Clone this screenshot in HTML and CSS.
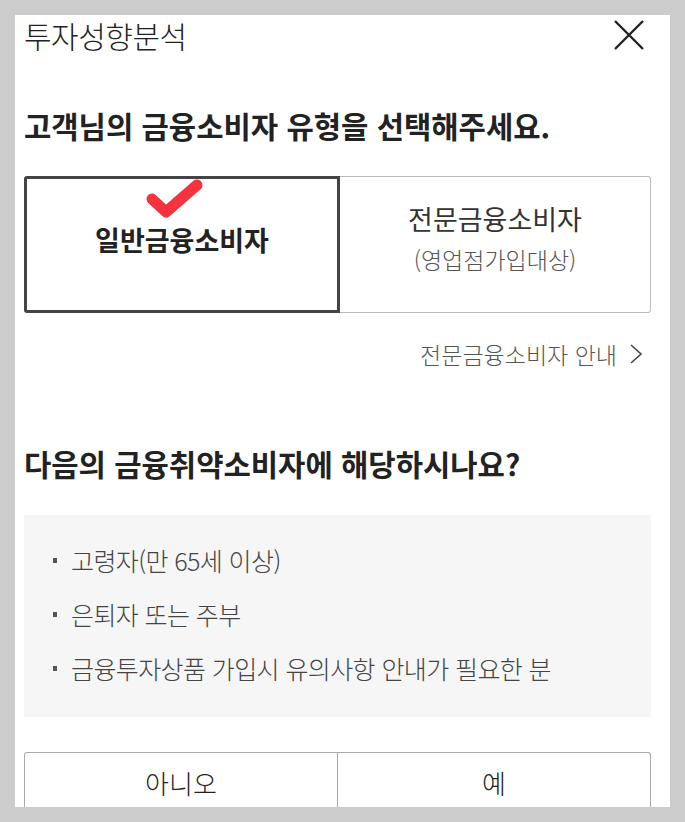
FILE: index.html
```html
<!DOCTYPE html>
<html lang="ko">
<head>
  <meta charset="UTF-8" />
  <meta name="viewport" content="width=device-width, initial-scale=1.0"/>
  <title>투자성향분석</title>
  <link rel="stylesheet" href="styles.css">
</head>
<body>
  <div class="panel">
    <div class="header">
      <h1 class="title">투자성향분석</h1>
      <button class="close" type="button" aria-label="닫기">
        <svg width="32" height="30" viewBox="0 0 32 30">
          <path d="M2 1 L30 29 M30 1 L2 29" stroke="#222" stroke-width="2.4" fill="none"/>
        </svg>
      </button>
    </div>

    <h2 class="question q-type">고객님의 금융소비자 유형을 선택해주세요.</h2>

    <div class="choice">
      <div class="option selected">
        <svg class="check" width="60" height="40" viewBox="0 0 60 40">
          <path d="M7 20 L21 33 L52 6" stroke="#f5333f" stroke-width="11" stroke-linecap="round" stroke-linejoin="round" fill="none"/>
        </svg>
        <span class="opt-name">일반금융소비자</span>
      </div>
      <div class="option">
        <span class="opt-name">전문금융소비자</span>
        <span class="opt-sub">(영업점가입대상)</span>
      </div>
    </div>

    <div class="guide">
      <a href="#">전문금융소비자 안내
        <svg width="14" height="22" viewBox="0 0 14 22"><path d="M2 2 L12 11 L2 20" stroke="#444" stroke-width="1.6" fill="none"/></svg>
      </a>
    </div>

    <h2 class="question q-weak">다음의 금융취약소비자에 해당하시나요?</h2>

    <ul class="info">
      <li>고령자(만 65세 이상)</li>
      <li>은퇴자 또는 주부</li>
      <li>금융투자상품 가입시 유의사항 안내가 필요한 분</li>
    </ul>

    <div class="answer">
      <button type="button" class="ans">아니오</button>
      <button type="button" class="ans">예</button>
    </div>
  </div>
</body>
</html>
```

FILE: styles.css
```css
body {
  margin: 0;
  background-color: #cccccc;
  font-family: "Noto Sans CJK KR", "Noto Sans", sans-serif;
  color: #222;
}
.panel {
  box-sizing: border-box;
  width: 655px;
  height: 792px;
  margin: 15px 0 0 15px;
  padding: 0 19px 0 9px;
  background: #fff;
}
.header {
  display: flex;
  justify-content: space-between;
  align-items: center;
  height: 40px;
}
.title {
  margin: 0;
  font-size: 30px;
  font-weight: 300;
  line-height: 40px;
  letter-spacing: -0.5px;
  color: #222;
}
.close {
  border: none;
  background: none;
  padding: 0;
  margin-right: 6px;
  margin-top: 2px;
}
.question {
  margin: 0;
  font-size: 29.7px;
  font-weight: bold;
  line-height: 36px;
  color: #222;
}
.q-type {
  margin-top: 53px;
}
.choice {
  display: flex;
  margin-top: 32px;
  height: 137px;
}
.option {
  position: relative;
  flex: 1;
  display: flex;
  flex-direction: column;
  justify-content: center;
  align-items: center;
  padding-bottom: 12px;
  border: 1px solid #bbb;
  border-radius: 3px;
}
.option + .option {
  border-left: none;
  border-radius: 0 3px 3px 0;
}
.option.selected {
  border: 3px solid #444;
  border-radius: 3px 0 0 3px;
  padding-bottom: 10px;
}
.check {
  position: absolute;
  left: 118px;
  top: 0;
}
.opt-name {
  font-size: 27px;
  line-height: 40px;
  color: #333;
}
.selected .opt-name {
  font-weight: bold;
  color: #222;
}
.opt-sub {
  font-size: 23px;
  font-weight: 300;
  line-height: 40px;
  color: #555;
}
.guide {
  text-align: right;
  margin-top: 24px;
  padding-right: 8px;
}
.guide a {
  font-size: 23px;
  font-weight: 300;
  color: #555;
  text-decoration: none;
  display: inline-flex;
  align-items: center;
  gap: 12px;
}
.q-weak {
  margin-top: 75px;
}
.info {
  list-style: none;
  margin: 33px 0 0;
  padding: 18px 0 22px 29px;
  background: #f6f6f6;
}
.info li {
  position: relative;
  padding-left: 18px;
  font-size: 25px;
  font-weight: 300;
  line-height: 54px;
  letter-spacing: -0.6px;
  color: #444;
}
.info li::before {
  content: "";
  position: absolute;
  left: 0;
  top: 25px;
  width: 4px;
  height: 5px;
  background: #555;
}
.answer {
  display: flex;
  margin-top: 35px;
}
.ans {
  flex: 1;
  height: 80px;
  margin: 0;
  border: 1px solid #aaa;
  border-bottom: none;
  background: transparent;
  font-family: inherit;
  font-size: 26px;
  font-weight: 300;
  color: #222;
  padding: 0 0 20px;
  border-radius: 3px 0 0 0;
}
.ans + .ans {
  border-left: none;
  border-radius: 0 3px 0 0;
}
```
